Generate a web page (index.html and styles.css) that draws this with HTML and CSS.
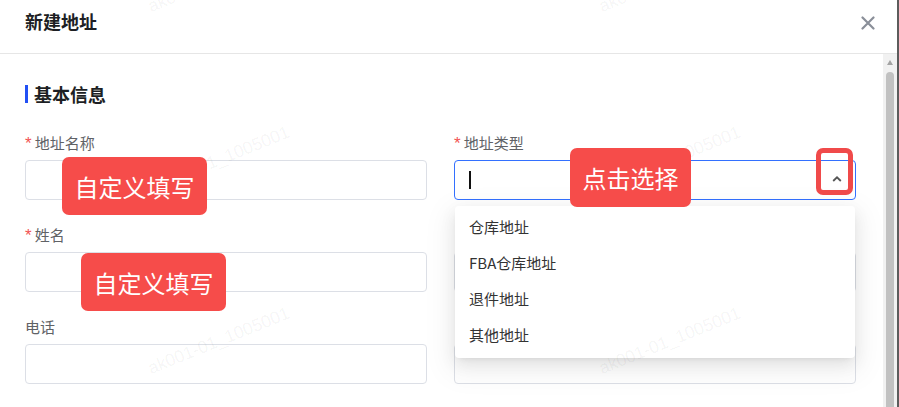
FILE: index.html
```html
<!DOCTYPE html>
<html lang="zh-CN">
<head>
    <meta charset="UTF-8">
    <meta name="viewport" content="width=device-width, initial-scale=1.0">
    <title>新建地址</title>
    <link rel="stylesheet" href="styles.css">
</head>
<body>
    <div class="window">
        <div class="dialog">
            <header class="dialog-head">
                <h2 class="dialog-title">新建地址</h2>
                <button class="close" type="button" aria-label="关闭">
                    <svg width="14" height="14" viewBox="0 0 14 14"><path d="M1.5 1.5 12.5 12.5M12.5 1.5 1.5 12.5" stroke="#8a8f99" stroke-width="2.2" stroke-linecap="round"/></svg>
                </button>
            </header>

            <div class="dialog-body">
                <div class="content">
                    <h3 class="section-title">基本信息</h3>

                    <div class="form-grid">
                        <div class="field">
                            <label class="field-label"><span class="req">*</span>地址名称</label>
                            <div class="input"></div>
                        </div>
                        <div class="field">
                            <label class="field-label"><span class="req">*</span>地址类型</label>
                            <div class="input select is-focus">
                                <span class="caret"></span>
                                <svg class="arrow" width="10" height="6" viewBox="0 0 10 6"><path d="M1.2 5 5 1.3 8.8 5" fill="none" stroke="#555" stroke-width="1.8"/></svg>
                                <ul class="dropdown">
                                    <li>仓库地址</li>
                                    <li>FBA仓库地址</li>
                                    <li>退件地址</li>
                                    <li>其他地址</li>
                                </ul>
                            </div>
                        </div>
                        <div class="field">
                            <label class="field-label"><span class="req">*</span>姓名</label>
                            <div class="input"></div>
                        </div>
                        <div class="field">
                            <label class="field-label">&nbsp;</label>
                            <div class="input"></div>
                        </div>
                        <div class="field">
                            <label class="field-label">电话</label>
                            <div class="input"></div>
                        </div>
                        <div class="field">
                            <label class="field-label">&nbsp;</label>
                            <div class="input"></div>
                        </div>
                    </div>
                </div>

                <div class="scrollbar">
                    <span class="scroll-up"></span>
                    <span class="scroll-thumb"></span>
                </div>
            </div>
        </div>
        <div class="edge"></div>

        <!-- 水印 -->
        <span class="wm wm-1">ak001-01_1005001</span>
        <span class="wm wm-2">ak001-01_1005001</span>
        <span class="wm wm-3">ak001-01_1005001</span>
        <span class="wm wm-4">ak001-01_1005001</span>
        <span class="wm wm-5">ak001-01_1005001</span>
        <span class="wm wm-6">ak001-01_1005001</span>

        <!-- 操作提示 -->
        <div class="tip tip-name">自定义填写</div>
        <div class="tip tip-person">自定义填写</div>
        <div class="tip tip-type">点击选择</div>
        <div class="mark"></div>
    </div>
</body>
</html>
```

FILE: styles.css
```css
* { box-sizing: border-box; }

body {
    margin: 0;
    background: #fff;
    font-family: "Noto Sans CJK SC", "Noto Sans", sans-serif;
    color: #333;
}

.window {
    position: relative;
    display: flex;
    width: 899px;
    height: 407px;
    overflow: hidden;
}

.dialog {
    flex: 1;
    display: flex;
    flex-direction: column;
    min-width: 0;
}

.edge {
    width: 2px;
    background: #5c5c5c;
}

/* 头部 */
.dialog-head {
    height: 54px;
    display: flex;
    align-items: flex-start;
    justify-content: space-between;
    padding: 9px 22px 0 25px;
    border-bottom: 1px solid #e6e6e6;
}
.dialog-title {
    margin: 0;
    font-size: 18px;
    line-height: 24px;
    font-weight: 700;
    color: #1d1f24;
}
.close {
    margin-top: 7px;
    padding: 0;
    border: 0;
    background: none;
    width: 14px;
    height: 14px;
    display: flex;
}

/* 内容区 */
.dialog-body {
    flex: 1;
    display: flex;
    min-height: 0;
}
.content {
    flex: 1;
    padding: 31px 27px 0 25px;
}
.section-title {
    margin: 0 0 29px;
    height: 18px;
    display: flex;
    align-items: center;
    gap: 6px;
    font-size: 18px;
    line-height: 18px;
    font-weight: 700;
    color: #1d1f24;
}
.section-title::before {
    content: '';
    width: 3px;
    height: 18px;
    background: #2250f4;
}

.form-grid {
    display: grid;
    grid-template-columns: 402px 402px;
    column-gap: 27px;
    row-gap: 24px;
}
.field-label {
    display: block;
    height: 22px;
    margin-bottom: 6px;
    font-size: 15px;
    line-height: 22px;
    color: #606266;
}
.req {
    font-family: "Liberation Sans", sans-serif;
    font-size: 17px;
    color: #f25353;
    margin-right: 3px;
}
.input {
    height: 40px;
    border: 1px solid #dcdfe6;
    border-radius: 4px;
    background: #fff;
}

.select {
    position: relative;
    display: flex;
    align-items: center;
    padding: 0 13px 0 14px;
}
.select.is-focus { border-color: #3370ff; }
.caret {
    width: 2px;
    height: 18px;
    background: #111;
}
.arrow { margin-left: auto; margin-top: -2px; }

.dropdown {
    position: absolute;
    top: 45px;
    left: 0;
    right: 0;
    margin: 0;
    padding: 3px 0 5px;
    list-style: none;
    background: #fff;
    border-radius: 4px;
    box-shadow: 0 6px 16px 0 rgba(0, 0, 0, .08), 0 3px 6px -4px rgba(0, 0, 0, .12), 0 9px 28px 8px rgba(0, 0, 0, .05);
    z-index: 10;
}
.dropdown li {
    height: 36px;
    line-height: 36px;
    padding: 0 14px;
    font-size: 15px;
    color: #333;
}

/* 滚动条 */
.scrollbar {
    width: 14px;
    background: #f1f1f1;
    position: relative;
    padding: 6px 0 0 3px;
}
.scroll-up {
    display: block;
    width: 0;
    height: 0;
    margin-left: 1px;
    border-left: 3.5px solid transparent;
    border-right: 3.5px solid transparent;
    border-bottom: 5px solid #a3a3a3;
}
.scroll-thumb {
    display: block;
    margin-top: 7px;
    width: 8px;
    height: 400px;
    border-radius: 4px 4px 0 0;
    background: #c1c1c1;
}

/* 水印 */
.wm {
    position: absolute;
    font-family: "Liberation Sans", sans-serif;
    font-size: 17.5px;
    line-height: 17px;
    color: rgba(0, 0, 0, .05);
    white-space: nowrap;
    transform: rotate(-22deg);
    transform-origin: left bottom;
    pointer-events: none;
    z-index: 20;
}
.wm-1 { left: 152px; top: -2px; }
.wm-2 { left: 603px; top: -2px; }
.wm-3 { left: 152px; top: 179px; }
.wm-4 { left: 603px; top: 179px; }
.wm-5 { left: 152px; top: 360px; }
.wm-6 { left: 603px; top: 360px; }

/* 提示标签 */
.tip {
    position: absolute;
    display: flex;
    align-items: center;
    justify-content: center;
    height: 58px;
    background: #f64c4a;
    border-radius: 7px;
    color: #fff;
    font-size: 24px;
    z-index: 30;
}
.tip-name { left: 62px; top: 157px; width: 145px; }
.tip-person { left: 81px; top: 253px; width: 145px; }
.tip-type { left: 570px; top: 148px; width: 121px; height: 59px; }

.mark {
    position: absolute;
    left: 816px;
    top: 148px;
    width: 37px;
    height: 47px;
    border: 5px solid #f04a4a;
    border-radius: 7px;
    z-index: 30;
}
```
